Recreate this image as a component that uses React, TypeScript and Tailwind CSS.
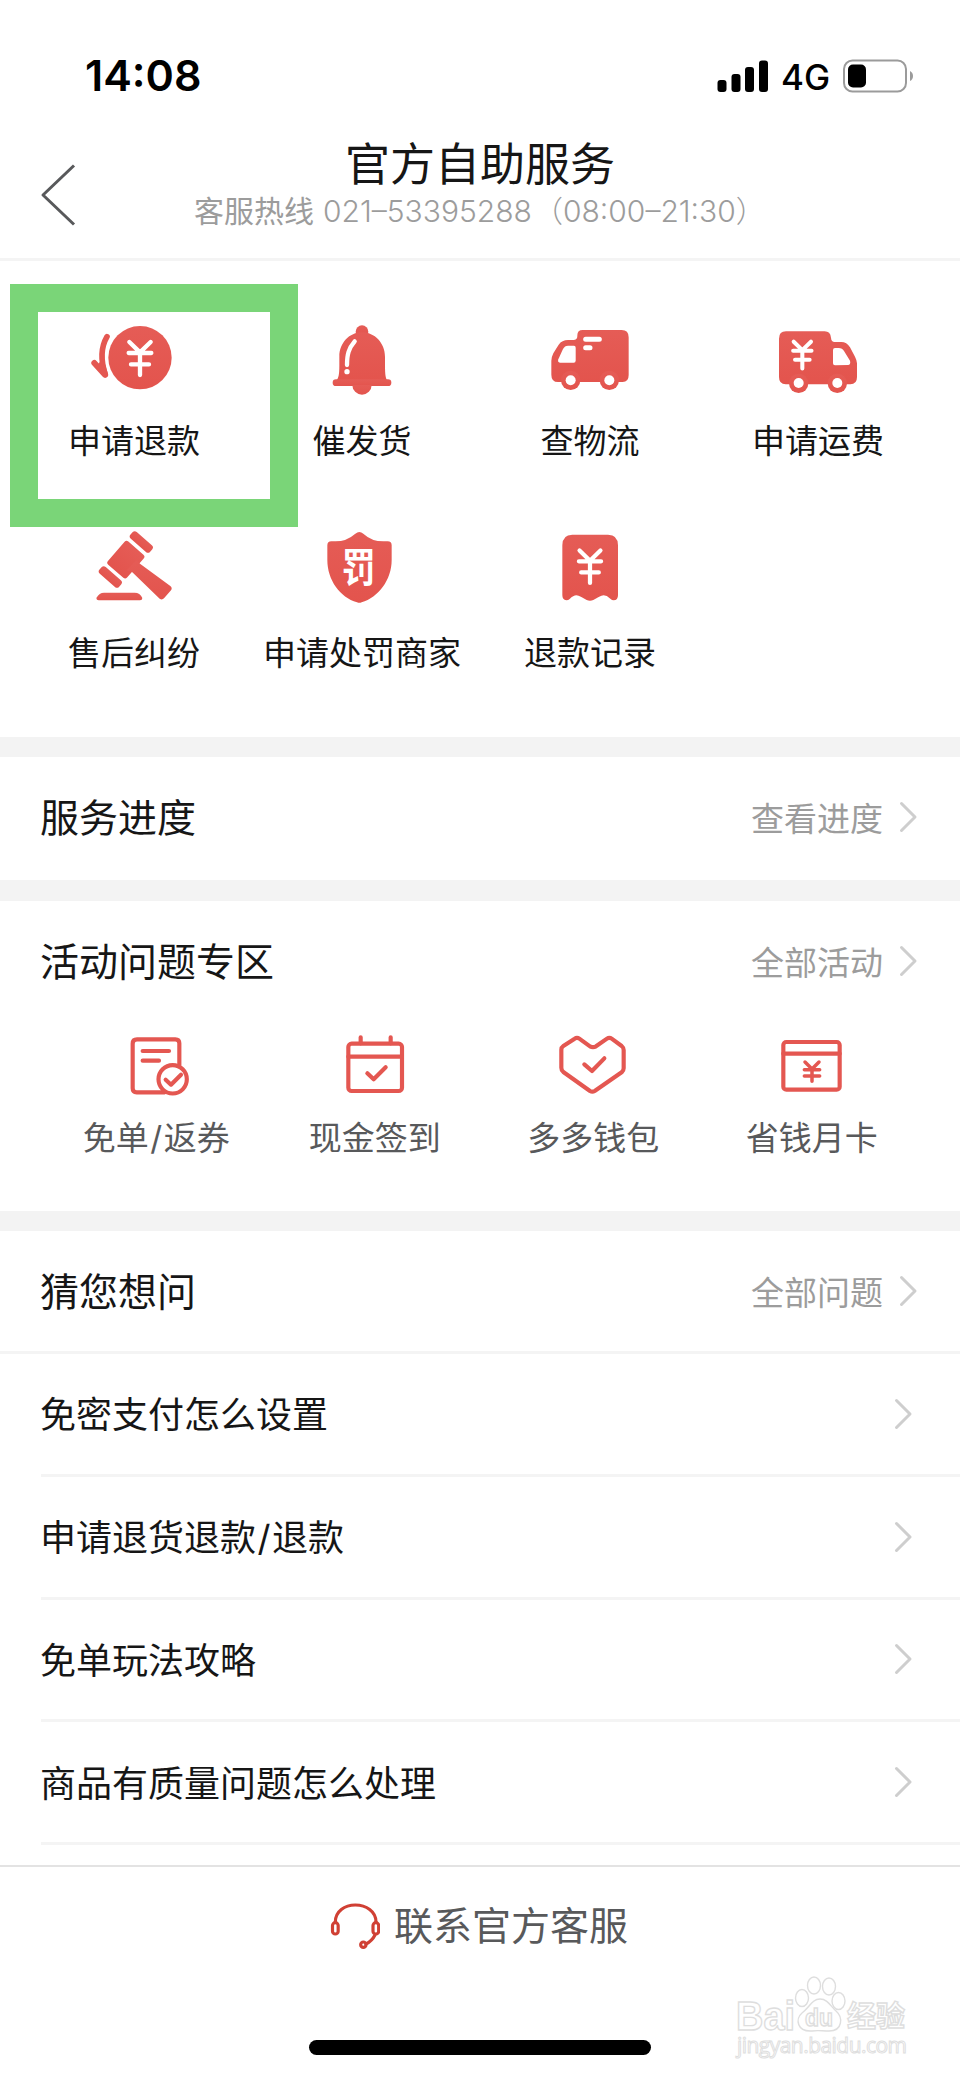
import React from 'react'

interface Entry {
  label: string
  icon: React.ReactNode
}

const RED = '#e45751'

function Yen({ x, y, scale = 1, color = '#fff', width = 13 }: {
  x: number
  y: number
  scale?: number
  color?: string
  width?: number
}) {
  return (
    <path
      transform={`translate(${x} ${y}) scale(${scale})`}
      d="M-32 -33 L0 -2 L32 -33 M-34 0 H34 M-27 34 H27 M0 0 V66"
      fill="none"
      stroke={color}
      strokeWidth={width}
      strokeLinecap="round"
      strokeLinejoin="round"
    />
  )
}

function SolidIcon({ children }: { children: React.ReactNode }) {
  return (
    <svg className="h-20 w-24" viewBox="0 0 288 240" fill="url(#red)">
      {children}
    </svg>
  )
}

function LineIcon({ children }: { children: React.ReactNode }) {
  return (
    <svg
      className="size-20"
      viewBox="0 0 240 240"
      fill="none"
      stroke={RED}
      strokeWidth="12.5"
      strokeLinecap="round"
      strokeLinejoin="round"
    >
      {children}
    </svg>
  )
}

const services: Entry[] = [
  {
    label: '申请退款',
    icon: (
      <SolidIcon>
        <circle cx="162" cy="122" r="95" />
        <path d="M63 59 C44 92 43 128 58 173" fill="none" stroke={RED} strokeWidth="17" strokeLinecap="round" />
        <path d="M25 138 L57 173 L48 142" stroke={RED} strokeWidth="18" strokeLinecap="round" strokeLinejoin="round" />
        <Yen x={162} y={108} />
      </SolidIcon>
    )
  },
  {
    label: '催发货',
    icon: (
      <SolidIcon>
        <circle cx="144" cy="44" r="19" />
        <path d="M76 119 C76 78 106 46 144 46 C182 46 213 78 213 119 V146 C213 172 215 186 221 192 H66 C74 184 76 172 76 146 Z" />
        <rect x="56" y="187" width="176" height="20" rx="10" />
        <path d="M115 204 A29 29 0 0 0 173 204 Z" />
        <path d="M122 73 C104 94 99 112 99 144" fill="none" stroke="#fff" strokeWidth="13" strokeLinecap="round" />
        <circle cx="99" cy="164" r="8" fill="#fff" />
      </SolidIcon>
    )
  },
  {
    label: '查物流',
    icon: (
      <SolidIcon>
        <path d="M28 131 Q28 121 34 109 L50 83 Q60 69 78 69 H94 Q106 69 106 57 V55 Q106 39 122 39 H239 Q260 39 260 61 V174 Q260 195 242 195 H48 Q28 195 28 173 Z" />
        <circle cx="86" cy="190" r="29" />
        <circle cx="202" cy="190" r="29" />
        <g fill="#fff">
          <circle cx="86" cy="190" r="15" />
          <circle cx="202" cy="190" r="15" />
          <path d="M49 127 L63 96 Q68 86 78 86 H96 Q101 86 101 92 V131 Q101 137 95 137 H54 Q46 137 49 127 Z" />
        </g>
        <path d="M131 67 H172 M131 92 H144" stroke="#fff" strokeWidth="15" strokeLinecap="round" />
      </SolidIcon>
    )
  },
  {
    label: '申请运费',
    icon: (
      <SolidIcon>
        <path d="M27 65 Q27 43 48 43 H164 Q181 43 183 62 Q184 75 194 75 H214 Q230 75 240 91 L255 119 Q261 131 261 139 V180 Q261 202 241 202 H47 Q27 202 27 180 Z" />
        <circle cx="86" cy="199" r="29" />
        <circle cx="202" cy="199" r="29" />
        <g fill="#fff">
          <circle cx="86" cy="198" r="15" />
          <circle cx="202" cy="198" r="15" />
          <path d="M189 99 Q189 93 195 93 H206 Q217 93 222 102 L240 131 Q243 143 234 144 L195 145 Q189 145 189 139 Z" />
        </g>
        <Yen x={97} y={101} scale={0.81} width={15} />
      </SolidIcon>
    )
  },
  {
    label: '售后纠纷',
    icon: (
      <SolidIcon>
        <g transform="translate(-258 -56)">
          <rect x="-39" y="-13.5" width="78" height="27" rx="9" transform="translate(424 95) rotate(41)" />
          <rect x="-38" y="-46" width="76" height="92" rx="8" transform="translate(377.5 148) rotate(41)" />
          <rect x="-39" y="-13.5" width="78" height="27" rx="9" transform="translate(331 200) rotate(41)" />
          <path d="M420 160 L511 227 Q518 233 513 240 L492 264 Q486 270 479 265 L397 186 L380 180 L410 148 Z" />
          <path d="M289 263 Q298 247 312 247 H404 Q420 247 427 263 Q427 270 420 270 H296 Q289 270 289 263 Z" />
        </g>
      </SolidIcon>
    )
  },
  {
    label: '申请处罚商家',
    icon: (
      <SolidIcon>
        <g transform="translate(-942 -57)">
          <path d="M1078 66 Q1084 66 1090 71 Q1115 94 1150 94 H1163 Q1175 94 1175 106 V150 C1175 210 1135 262 1085 277 Q1078 280 1071 277 C1020 262 982 210 982 150 V106 Q982 94 994 94 H1006 Q1040 94 1066 71 Q1072 66 1078 66 Z" />
          <text
            x="0"
            y="0"
            transform="translate(1076 217) scale(0.94 1.1)"
            textAnchor="middle"
            fontSize="108"
            fill="#fff"
            className="font-['Noto_Sans_CJK_SC',sans-serif] font-bold"
          >
            罚
          </text>
        </g>
      </SolidIcon>
    )
  },
  {
    label: '退款记录',
    icon: (
      <SolidIcon>
        <g transform="translate(-186 -56)">
          <path d="M247 105 Q247 73 277 73 H384 Q414 73 414 105 V255 Q414 270 401 270 Q396 270 391 265 Q380 255 371 255 Q365 255 356 260 L340 269 Q330 274 320 269 L304 260 Q295 255 289 255 Q280 255 269 266 Q265 270 259 270 Q247 268 247 255 Z" />
          <Yen x={330} y={153} scale={0.98} />
        </g>
      </SolidIcon>
    )
  }
]

const activities: Entry[] = [
  {
    label: '免单/返券',
    icon: (
      <LineIcon>
        <g transform="translate(-349 -795)">
          <path d="M539 915 V850 Q539 838 527 838 H412 Q399 838 399 851 V985 Q399 997 411 997 H495" />
          <path d="M429 873 H508 M429 902 H478" />
          <circle cx="519" cy="958" r="42.5" />
          <path d="M498 959 L514 974 L544 944" />
        </g>
      </LineIcon>
    )
  },
  {
    label: '现金签到',
    icon: (
      <LineIcon>
        <g transform="translate(-1005 -795)">
          <rect x="1045" y="851" width="161" height="142" rx="10" />
          <path d="M1045 890 H1206 M1082 832 V850 M1172 832 V850" />
          <path d="M1102 940 L1121 958 L1157 922" />
        </g>
      </LineIcon>
    )
  },
  {
    label: '多多钱包',
    icon: (
      <LineIcon>
        <g transform="translate(-220 -435)">
          <path d="M285 476 L251 498 Q245 502 245 509 V563 Q245 571 251 576 L331 633 Q338 637 345 633 L426 577 Q432 572 432 565 V510 Q432 503 426 498 L396 476 Q389 471 382 476 L349 499 Q340 504 331 499 L299 476 Q292 471 285 476 Z" />
          <path d="M314 553 L337 573 L374 535" />
        </g>
      </LineIcon>
    )
  },
  {
    label: '省钱月卡',
    icon: (
      <LineIcon>
        <g transform="translate(-876 -435)">
          <rect x="910" y="486" width="169" height="143" rx="9" />
          <path d="M910 521 H1079" />
          <path d="M975 546 L996 567 L1017 546 M973 569 H1019 M973 588 H1019 M996 569 V604" strokeWidth="10.5" />
        </g>
      </LineIcon>
    )
  }
]

const questions = ['免密支付怎么设置', '申请退货退款/退款', '免单玩法攻略', '商品有质量问题怎么处理']

function Chevron() {
  return (
    <svg className="h-8 w-5" viewBox="0 0 20 32" fill="none" stroke="#cecece" strokeWidth="3" strokeLinecap="round" strokeLinejoin="round">
      <path d="M2.5 2.5 L16 16 L2.5 29.5" />
    </svg>
  )
}

// The latin slash is narrower than the one drawn with CJK labels, so pad it.
function Label({ text }: { text: string }) {
  const [before, after] = text.split('/')
  if (!after) return <>{text}</>
  return (
    <>
      {before}
      <span className="px-[1.5px]">/</span>
      {after}
    </>
  )
}

function SectionHeader({ title, more }: { title: string; more: string }) {
  return (
    <div className="flex h-[120px] items-center justify-between pr-[41px] pl-10">
      <h2 className="text-[39px]">{title}</h2>
      <div className="flex items-center gap-[15px] text-[33px] text-[#9c9c9c]">
        <span className="relative top-0.5 right-px">{more}</span>
        <Chevron />
      </div>
    </div>
  )
}

function Divider() {
  return <div className="h-5 bg-[#f3f3f3]" />
}

function StatusBar() {
  return (
    <div className="flex h-[130px] items-start justify-between pt-[46px] pr-[47px] pl-[85px] text-black">
      <div className="h-[60px] text-[43px] leading-[59px] font-semibold">14:08</div>
      <div className="flex h-[60px] items-center">
        <svg className="h-[33px] w-[52px]" viewBox="0 0 52 33">
          <rect x="0.5" y="20" width="9" height="12" rx="3" />
          <rect x="14.5" y="14" width="9" height="18" rx="3" />
          <rect x="28" y="7" width="9" height="25" rx="3" />
          <rect x="42" y="0.5" width="9" height="31.5" rx="3" />
        </svg>
        <span className="ml-3 w-[50px] pt-0.5 text-[35px] font-medium">4G</span>
        <svg className="ml-2.5 h-[34px] w-[72px]" viewBox="0 0 72 34">
          <rect x="3" y="1.5" width="62" height="31" rx="8.5" fill="none" stroke="#9b9b9b" strokeWidth="2" />
          <rect x="7" y="5.5" width="18" height="23" rx="5" />
          <path d="M69 12 Q72 13.5 72 17 Q72 20.5 69 22 Z" fill="#9b9b9b" />
        </svg>
      </div>
    </div>
  )
}

function Watermark() {
  return (
    <svg
      className="absolute top-[1970px] left-[730px] h-[96px] w-[186px] font-['Liberation_Sans','Noto_Sans_CJK_SC',sans-serif] font-bold"
      viewBox="0 0 186 96"
      fill="#fff"
      stroke="#dedede"
      strokeWidth="1.4"
    >
      <text x="6" y="60" fontSize="40" textLength="59" lengthAdjust="spacingAndGlyphs">Bai</text>
      <ellipse cx="72" cy="28" rx="6.5" ry="8.5" />
      <ellipse cx="84" cy="15.5" rx="6.5" ry="8.5" />
      <ellipse cx="99" cy="16.5" rx="6.5" ry="8.5" />
      <ellipse cx="108.5" cy="31" rx="6.5" ry="8.5" />
      <path d="M90 29 C98 29 101 37 106 41 C113 47 113 61 99 61 C92 61 88 60 82 61 C67 62 65 49 72 43 C79 38 82 29 90 29 Z" />
      <text x="75" y="55.5" fontSize="23" textLength="28" lengthAdjust="spacingAndGlyphs">du</text>
      <text x="117" y="57" fontSize="29">经验</text>
      <text
        x="7"
        y="83"
        fontSize="21"
        textLength="170"
        className="font-['Open_Sans',sans-serif] font-normal"
        strokeWidth="1"
      >
        jingyan.baidu.com
      </text>
    </svg>
  )
}

export default function App() {
  return (
    <div className="relative h-[2079px] w-[960px] overflow-hidden bg-white font-[Inter,'Noto_Sans_CJK_SC',sans-serif] leading-none text-[#161616]">
      <svg className="absolute size-0">
        <defs>
          <linearGradient id="red" x1="0" y1="0" x2="0" y2="1">
            <stop offset="0" stopColor="#e55c56" />
            <stop offset="1" stopColor="#e3544d" />
          </linearGradient>
        </defs>
      </svg>

      <StatusBar />

      <header className="flex h-[131px] border-b-[3px] border-[#f4f4f4]">
        <svg className="mt-[34px] ml-[39px] h-[62px] w-10" viewBox="0 0 40 62" fill="none" stroke="#58595b" strokeWidth="3" strokeLinejoin="round">
          <path d="M35 1.5 L4 31 L35 60.5" />
        </svg>
        <div className="ml-[115px] w-[640px]">
          <h1 className="mt-3 ml-[151px] text-[45px]">官方自助服务</h1>
          <p className="mt-0.5 flex whitespace-nowrap text-[30px] leading-[44px] font-light text-[#9c9c9c]">
            <span className="w-[129px] font-normal">客服热线</span>
            <span className="w-[208px]">021–53395288</span>
            <span className="ml-0.5">（08:00–21:30）</span>
          </p>
        </div>
      </header>

      <section className="relative grid h-[476px] grid-cols-4 content-start gap-y-[71px] pt-14 pr-7 pl-5">
        {services.map((item) => (
          <div key={item.label} className="flex h-[141px] flex-col items-center justify-between">
            {item.icon}
            <span className="text-[33px] whitespace-nowrap">{item.label}</span>
          </div>
        ))}
        <div className="absolute top-[23px] left-[9.5px] h-[243px] w-[288.5px] border-[28px] border-[#7ad578]" />
      </section>

      <Divider />
      <SectionHeader title="服务进度" more="查看进度" />
      <div className="mt-[3px] h-[21px] bg-[#f3f3f3]" />

      <section className="h-[310px]">
        <SectionHeader title="活动问题专区" more="全部活动" />
        <div className="grid grid-cols-4 pt-1 pr-[39px] pl-[47px]">
          {activities.map((item) => (
            <div key={item.label} className="flex h-[130px] flex-col items-center justify-between">
              {item.icon}
              <span className="text-[33px] text-[#58595b]">
                <Label text={item.label} />
              </span>
            </div>
          ))}
        </div>
      </section>

      <Divider />
      <section className="h-[634px]">
        <div className="border-b-[3px] border-[#f4f4f4]">
          <SectionHeader title="猜您想问" more="全部问题" />
        </div>
        {questions.map((question) => (
          <div key={question} className="ml-[41px] flex h-[122.8px] items-center justify-between border-b-[3px] border-[#f4f4f4] pr-[46px] text-[36px]">
            <span className="-ml-px pt-[3px]">
              <Label text={question} />
            </span>
            <Chevron />
          </div>
        ))}
      </section>

      <footer className="flex h-[214px] flex-col items-center border-t-2 border-[#e3e3e3] bg-white">
        <div className="mt-8 mr-0.5 flex h-[52px] items-center text-[39px] text-[#58595b]">
          <svg className="mt-0.5 mr-3.5 h-12 w-[50px]" viewBox="0 0 150 144" fill="none" stroke="#d04034" strokeWidth="9.5" strokeLinecap="round">
            <path d="M16 60 C16 28 44 9 76 9 C108 9 138 28 138 60" />
            <rect x="7.5" y="62" width="17" height="34" rx="8.5" />
            <rect x="129" y="62" width="17" height="34" rx="8.5" />
            <path d="M135 99 Q126 117 108 126" />
            <circle cx="100" cy="128" r="8" />
          </svg>
          联系官方客服
        </div>
        <div className="mt-[89px] h-[15px] w-[342px] rounded-full bg-black" />
      </footer>

      <Watermark />
    </div>
  )
}
